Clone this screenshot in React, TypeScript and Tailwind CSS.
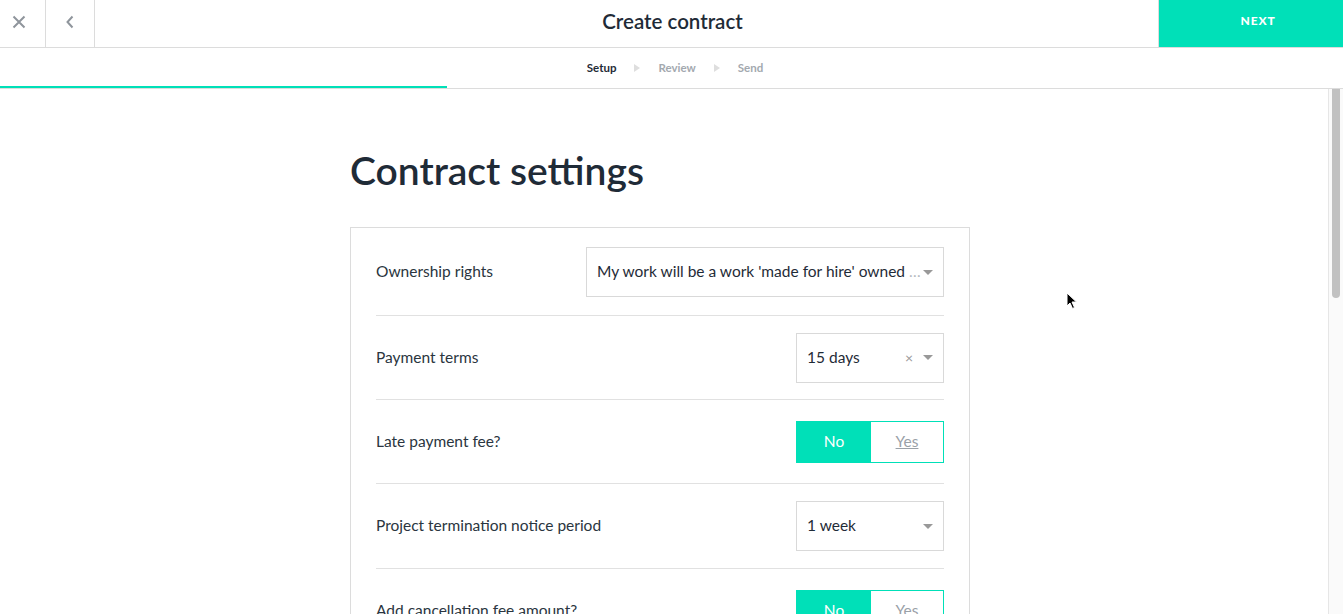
import React from 'react'

const font = { fontFamily: 'Lato, "Source Sans Pro", "Noto Sans", sans-serif' }

function Caret() {
    return (
        <svg width="10" height="5" viewBox="0 0 10 5" className="shrink-0">
            <path d="M0 0h10L5 5z" fill="#999" />
        </svg>
    )
}

function Select({ value, width, clearable, cut }: { value: string; width: string; clearable?: boolean; cut?: boolean }) {
    return (
        <div className={`${width} h-[50px] border border-[#d9d9d9] flex items-center pl-[10px] pr-[10px] bg-white`}>
            <span className="flex-1 whitespace-nowrap overflow-hidden text-[15.5px] text-[#1f2b37]">
                {value}
                {cut && <span className="text-[#b5bac0]"> …</span>}
            </span>
            {clearable && <span className="text-[14px] text-[#999] mr-[10px] leading-none">×</span>}
            <Caret />
        </div>
    )
}

function Toggle() {
    return (
        <div className="w-[148px] h-[42px] border border-[#00e0b8] flex text-[15.5px]">
            <div className="w-[74px] bg-[#00e0b8] text-white flex items-center justify-center">No</div>
            <div className="flex-1 bg-white text-[#9aa1a8] underline flex items-center justify-center">Yes</div>
        </div>
    )
}

function Row({ label, children, h, last }: { label: string; children: React.ReactNode; h: string; last?: boolean }) {
    return (
        <div className={`${h} flex items-center justify-between ${last ? '' : 'border-b border-[#e1e1e1]'}`}>
            <span className="text-[15.5px] text-[#2a3540]">{label}</span>
            {children}
        </div>
    )
}

export default function App() {
    return (
        <div className="h-[614px] w-[1343px] overflow-hidden bg-white flex flex-col relative" style={font}>
            <header className="h-[48px] shrink-0 flex border-b border-[#dcdcdc]">
                <div className="w-[46px] border-r border-[#dcdcdc] flex items-center justify-start pl-[12px] pb-[4px]">
                    <svg width="14" height="14" viewBox="0 0 14 14">
                        <path d="M1.5 1.5l11 11M12.5 1.5l-11 11" stroke="#8f959c" strokeWidth="2" />
                    </svg>
                </div>
                <div className="w-[49px] border-r border-[#dcdcdc] flex items-center justify-center pb-[4px]">
                    <svg width="10" height="14" viewBox="0 0 10 14">
                        <path d="M7.5 1.5L2.5 7l5 5.5" stroke="#8f959c" strokeWidth="2" fill="none" />
                    </svg>
                </div>
                <div className="flex-1 flex items-center justify-center pl-[92px] pb-[5px]">
                    <h1 className="text-[20.5px] font-semibold text-[#1f2b37]">Create contract</h1>
                </div>
                <div className="w-[185px] border-l border-[#dcdcdc] bg-[#00e0b8] flex items-center justify-center pl-[14px] pb-[5px]">
                    <span className="text-white text-[12px] font-black tracking-[0.07em]">NEXT</span>
                </div>
            </header>
            <div className="h-[41px] shrink-0 relative border-b border-[#dcdcdc] flex items-center justify-center gap-[18px] text-[11.5px] font-bold pl-[7px]">
                <span className="text-[#1f2b37]">Setup</span>
                <svg width="6" height="8" viewBox="0 0 6 8"><path d="M0 0l6 4-6 4z" fill="#dedede" /></svg>
                <span className="text-[#a3a9af]">Review</span>
                <svg width="6" height="8" viewBox="0 0 6 8"><path d="M0 0l6 4-6 4z" fill="#dedede" /></svg>
                <span className="text-[#a3a9af]">Send</span>
                <div className="absolute left-0 bottom-0 w-[447px] h-[2px] bg-[#00e0b8]" />
            </div>
            <div className="flex-1 flex min-h-0">
                <main className="flex-1 overflow-hidden">
                    <div className="w-[620px] ml-[350px] pt-[57px]">
                        <h2 className="text-[39px] font-semibold text-[#1f2b37] leading-[48px]">Contract settings</h2>
                        <div className="mt-[33px] border border-[#dcdcdc] px-[25px] pt-[1px]">
                            <Row label="Ownership rights" h="h-[87px]">
                                <Select width="w-[358px]" value="My work will be a work 'made for hire' owned" cut />
                            </Row>
                            <Row label="Payment terms" h="h-[84px]">
                                <Select width="w-[148px]" value="15 days" clearable />
                            </Row>
                            <Row label="Late payment fee?" h="h-[84px]">
                                <Toggle />
                            </Row>
                            <Row label="Project termination notice period" h="h-[85px]">
                                <Select width="w-[148px]" value="1 week" />
                            </Row>
                            <Row label="Add cancellation fee amount?" h="h-[84px]" last>
                                <Toggle />
                            </Row>
                        </div>
                    </div>
                </main>
                <div className="w-[15px] shrink-0 border-l border-[#e6e6e6] bg-[#fafafa] pl-[3px] pr-[3px]">
                    <div className="h-[209px] bg-[#c1c1c1] rounded-b-[4px]" />
                </div>
            </div>
            <svg className="absolute left-[1066px] top-[292px]" width="12" height="18" viewBox="0 0 12 18">
                <path d="M1 1v13l3-3 2.5 5.5 2-1L6 10h4.5z" fill="#000" stroke="#fff" strokeWidth="1" />
            </svg>
        </div>
    )
}
